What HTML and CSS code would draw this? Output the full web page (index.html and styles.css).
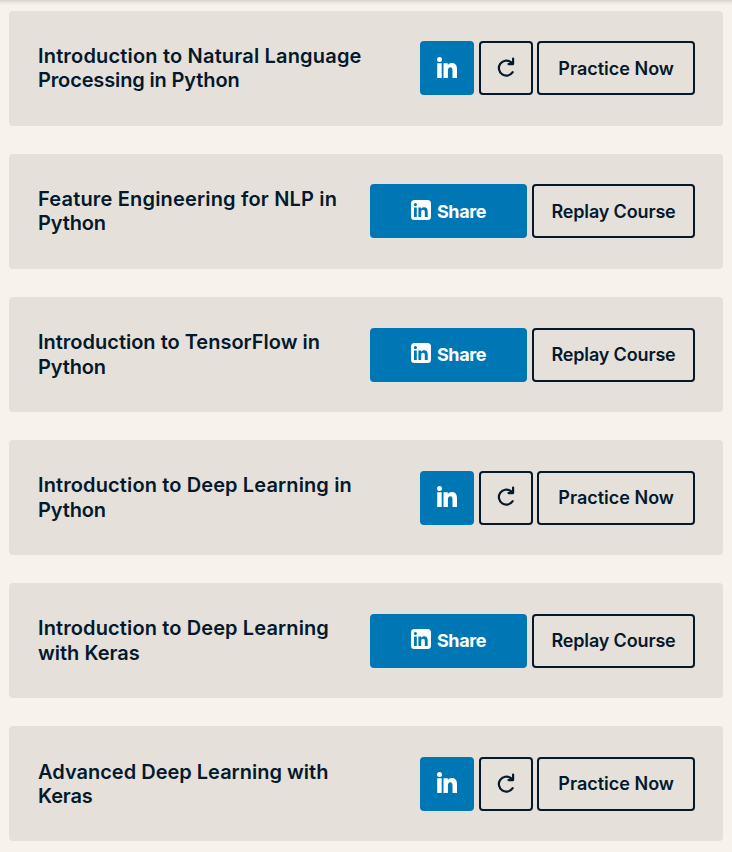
FILE: index.html
```html
<!DOCTYPE html>
<html lang="en">
<head>
<meta charset="utf-8">
<title>Courses</title>
<link rel="stylesheet" href="styles.css">
</head>
<body>
<svg class="defs" width="0" height="0" aria-hidden="true">
  <symbol id="in" viewBox="0 0 20 21">
    <circle cx="2.500" cy="2.500" r="2.500"/>
    <path d="M.2 6.300h4.500V21H.2zM6.500 6.300h4.300v1.900c.8-1.500 2.200-2.300 3.900-2.300 3.800 0 5.300 2.300 5.300 6.500V21h-4.500v-7.300c0-2.300-.6-3.500-2.200-3.500-1.700 0-2.400 1.300-2.400 3.500V21H6.500z"/>
  </symbol>
  <symbol id="in-box" viewBox="0 0 20 20">
    <path fill-rule="evenodd" d="M3.500 0h13A3.500 3.500 0 0 1 20 3.500v13a3.500 3.500 0 0 1-3.500 3.500h-13A3.500 3.500 0 0 1 0 16.500v-13A3.500 3.500 0 0 1 3.500 0zM3 7.500V17h2.800V7.500zM4.400 3a1.600 1.600 0 1 0 0 3.200 1.600 1.600 0 0 0 0-3.200zM7.400 7.500V17h2.800v-4.800c0-1.600.6-2.400 1.800-2.400s1.800.8 1.800 2.400V17h2.900v-5.400c0-3-1.200-4.400-3.500-4.400-1.500 0-2.400.7-3.100 1.700V7.500z"/>
  </symbol>
  <symbol id="redo" viewBox="0 0 18 20">
    <path d="M15.700 15.200A7.500 7.500 0 1 1 13.700 5L15.800 6.500M16.100 1.500v5.600h-4.600" fill="none" stroke="currentColor" stroke-width="2.200" stroke-linecap="round" stroke-linejoin="round"/>
  </symbol>
</svg>
<main class="courses">
  <article class="card">
    <h2 class="title"><span class="loose">Introduction to Natural Language</span><br><span class="tight">Processing in Python</span></h2>
    <div class="actions">
      <button class="btn linkedin square"><svg class="icon-in"><use href="#in"/></svg></button>
      <button class="btn square"><svg class="icon-redo"><use href="#redo"/></svg></button>
      <button class="btn practice">Practice Now</button>
    </div>
  </article>
  <article class="card">
    <h2 class="title"><span class="loose">Feature Engineering for NLP in</span><br><span class="tight">Python</span></h2>
    <div class="actions">
      <button class="btn linkedin share"><svg class="icon-box"><use href="#in-box"/></svg><span>Share</span></button>
      <button class="btn replay">Replay Course</button>
    </div>
  </article>
  <article class="card">
    <h2 class="title">Introduction to TensorFlow in<br><span class="tight">Python</span></h2>
    <div class="actions">
      <button class="btn linkedin share"><svg class="icon-box"><use href="#in-box"/></svg><span>Share</span></button>
      <button class="btn replay">Replay Course</button>
    </div>
  </article>
  <article class="card">
    <h2 class="title"><span class="open">Introduction to Deep Learning in</span><br><span class="tight">Python</span></h2>
    <div class="actions">
      <button class="btn linkedin square"><svg class="icon-in"><use href="#in"/></svg></button>
      <button class="btn square"><svg class="icon-redo"><use href="#redo"/></svg></button>
      <button class="btn practice">Practice Now</button>
    </div>
  </article>
  <article class="card">
    <h2 class="title"><span class="open">Introduction to Deep Learning</span><br>with Keras</h2>
    <div class="actions">
      <button class="btn linkedin share"><svg class="icon-box"><use href="#in-box"/></svg><span>Share</span></button>
      <button class="btn replay">Replay Course</button>
    </div>
  </article>
  <article class="card">
    <h2 class="title compact">Advanced Deep Learning with<br><span class="tight">Keras</span></h2>
    <div class="actions">
      <button class="btn linkedin square"><svg class="icon-in"><use href="#in"/></svg></button>
      <button class="btn square"><svg class="icon-redo"><use href="#redo"/></svg></button>
      <button class="btn practice">Practice Now</button>
    </div>
  </article>
</main>
</body>
</html>
```
FILE: styles.css
```css
* { box-sizing: border-box; }
html { height: 100%; overflow: hidden; }
body {
  margin: 0;
  height: 852px;
  overflow: hidden;
  background: linear-gradient(#d9d7d2 0, #d9d7d2 1px, #e9e5df 2px, #f7f3eb 5px) #f7f3eb;
  color: #05192d;
  font-family: Inter, sans-serif;
}
.defs { display: block; }
.courses {
  display: flex;
  flex-direction: column;
  gap: 28.12px;
  padding: 10.8px 9px 0;
}
.card {
  display: flex;
  flex: none;
  align-items: center;
  justify-content: space-between;
  height: 115px;
  padding: 0 28px 0 29px;
  border-radius: 4px;
  background: #e5e1da;
}
.title {
  margin: 0;
  font-size: 20px;
  font-weight: 600;
  line-height: 24.36px;
  white-space: nowrap;
}
.compact { line-height: 24px; padding-top: .6px; }
.loose { letter-spacing: .18px; }
.open { letter-spacing: .12px; }
.tight { letter-spacing: -.14px; }
.actions { display: flex; flex: none; gap: 4.5px; }
.btn {
  display: flex;
  align-items: center;
  justify-content: center;
  height: 54px;
  padding: .6px 0 0;
  border: 2px solid #05192d;
  border-radius: 4px;
  background: transparent;
  color: #05192d;
  font: 600 18px/24px Inter, sans-serif;
  white-space: nowrap;
}
.square { width: 54px; }
.practice { width: 157.7px; }
.replay { width: 163px; letter-spacing: -.15px; }
.share { width: 157px; margin-right: .5px; gap: 6px; font-weight: 700; letter-spacing: -.4px; }
.linkedin { border-color: #0077b5; background: #0077b5; color: #fff; }
.icon-in { width: 20px; height: 21px; fill: currentColor; margin-top: -3px; }
.icon-box { width: 20px; height: 20px; fill: currentColor; margin-top: -4px; }
.icon-redo { width: 18px; height: 20px; margin: -3px 0 0 0; }
```
